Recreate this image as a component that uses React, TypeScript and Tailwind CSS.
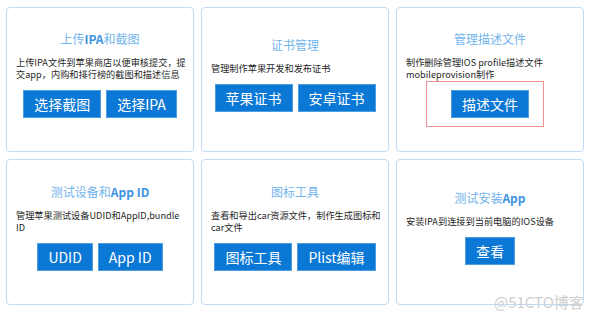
import type { ReactNode } from "react";

const font = { fontFamily: '"Noto Sans CJK SC", "Noto Sans", sans-serif' };

function Btn({ children }: { children: ReactNode }) {
  return (
    <div className="h-[28px] px-[10px] flex items-center justify-center bg-[#0b78d6] border border-[#4d9de0] text-white text-[14px] leading-none whitespace-nowrap">
      {children}
    </div>
  );
}

function Card({ title, desc, children }: { title: ReactNode; desc: ReactNode; children: ReactNode }) {
  return (
    <div className="relative border border-[#bfdbf6] rounded-[4px] flex flex-col items-center justify-center px-[9px] pb-[10px]">
      <div className="text-[12px] leading-[16px] text-[#72b4ec] whitespace-nowrap">{title}</div>
      <div className="self-stretch mt-[9px] text-[9.2px] leading-[12px] text-[#1f1f1f] whitespace-nowrap">{desc}</div>
      <div className="mt-[10px] flex gap-[5px]">{children}</div>
    </div>
  );
}

const B = ({ children }: { children: ReactNode }) => <span className="font-bold text-[#3f93e3]">{children}</span>;

export default function App() {
  return (
    <div className="relative w-[591px] h-[318px] bg-white pl-[6px] pt-[7px]" style={font}>
      <div className="grid grid-cols-[188px_188px_188px] grid-rows-[145px_146px] gap-[7px]">
        <Card title={<>上传<B>IPA</B>和截图</>} desc={<>上传IPA文件到苹果商店以便审核提交，提<br />交app，内购和排行榜的截图和描述信息</>}>
          <Btn>选择截图</Btn>
          <Btn>选择IPA</Btn>
        </Card>
        <Card title="证书管理" desc="管理制作苹果开发和发布证书">
          <Btn>苹果证书</Btn>
          <Btn>安卓证书</Btn>
        </Card>
        <Card title="管理描述文件" desc={<>制作删除管理IOS profile描述文件<br />mobileprovision制作</>}>
          <div className="relative">
            <span className="absolute -left-[25px] -right-[15px] -top-[9px] -bottom-[9px] border border-[#f09090]" />
            <Btn>描述文件</Btn>
          </div>
        </Card>
        <Card title={<>测试设备和<B>App ID</B></>} desc={<>管理苹果测试设备UDID和AppID,bundle<br />ID</>}>
          <Btn>UDID</Btn>
          <Btn>App ID</Btn>
        </Card>
        <Card title="图标工具" desc={<>查看和导出car资源文件，制作生成图标和<br />car文件</>}>
          <Btn>图标工具</Btn>
          <Btn>Plist编辑</Btn>
        </Card>
        <Card title={<>测试安装<B>App</B></>} desc="安装IPA到连接到当前电脑的IOS设备">
          <Btn>查看</Btn>
        </Card>
      </div>
      <div className="absolute left-[494px] top-[292px] text-[15px] leading-[20px] text-[#cfcfcf] whitespace-nowrap">@51CTO博客</div>
    </div>
  );
}
